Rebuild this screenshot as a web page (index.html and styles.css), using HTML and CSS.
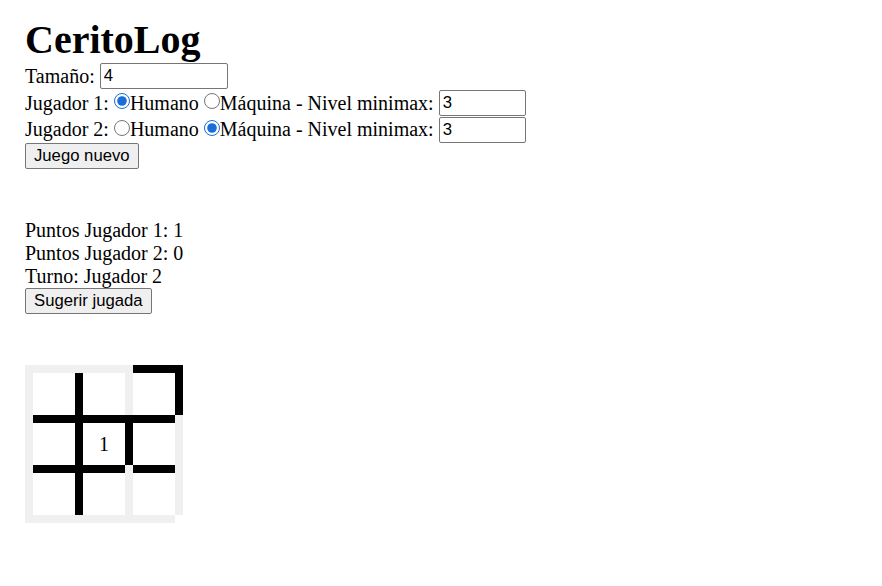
FILE: index.html
```html
<!DOCTYPE html>
<html>
<head>
<meta charset="utf-8">
<title>CeritoLog</title>
<link rel="stylesheet" href="styles.css">
</head>
<body class="page">
  <h1 class="title">CeritoLog</h1>
  <div class="row">Tamaño: <input class="field field-size" type="text" value="4"></div>
  <div class="row">Jugador 1: <input class="radio" type="radio" name="j1" checked>Humano <input class="radio" type="radio" name="j1">Máquina - Nivel minimax: <input class="field field-level" type="text" value="3"></div>
  <div class="row">Jugador 2: <input class="radio" type="radio" name="j2">Humano <input class="radio" type="radio" name="j2" checked>Máquina - Nivel minimax: <input class="field field-level" type="text" value="3"></div>
  <div class="row"><button class="btn">Juego nuevo</button></div>

  <div class="status">
    <div class="line">Puntos Jugador 1: 1</div>
    <div class="line">Puntos Jugador 2: 0</div>
    <div class="line">Turno: Jugador 2</div>
    <div class="row"><button class="btn">Sugerir jugada</button></div>
  </div>

  <div class="board">
    <div class="c g"></div><div class="c g"></div><div class="c g"></div><div class="c g"></div><div class="c g"></div><div class="c k"></div><div class="c k"></div>
    <div class="c g"></div><div class="c w"></div><div class="c k"></div><div class="c w"></div><div class="c g"></div><div class="c w"></div><div class="c k"></div>
    <div class="c g"></div><div class="c k"></div><div class="c k"></div><div class="c k"></div><div class="c k"></div><div class="c k"></div><div class="c g"></div>
    <div class="c g"></div><div class="c w"></div><div class="c k"></div><div class="c w box">1</div><div class="c k"></div><div class="c w"></div><div class="c g"></div>
    <div class="c g"></div><div class="c k"></div><div class="c k"></div><div class="c k"></div><div class="c g"></div><div class="c k"></div><div class="c g"></div>
    <div class="c g"></div><div class="c w"></div><div class="c k"></div><div class="c w"></div><div class="c g"></div><div class="c w"></div><div class="c g"></div>
    <div class="c g"></div><div class="c g"></div><div class="c g"></div><div class="c g"></div><div class="c g"></div><div class="c g"></div><div class="c w"></div>
  </div>
</body>
</html>
```

FILE: styles.css
```css
html, body {
  background: #ffffff;
}

.page {
  margin: 0;
  padding: 17px 25px 0 25px;
  font-family: "Liberation Serif", "Times New Roman", serif;
  font-size: 20px;
  line-height: 23px;
  color: #000000;
}

.title {
  margin: 0;
  font-size: 40px;
  line-height: 46px;
  font-weight: bold;
}

.row {
  height: 26.7px;
  display: flex;
  align-items: center;
  white-space: pre;
}

.field {
  box-sizing: border-box;
  height: 26px;
  margin: 0;
  padding: 1px 3px;
  border: 1px solid #767676;
  border-radius: 2px;
  font-family: "Liberation Sans", Arial, sans-serif;
  font-size: 16.7px;
  color: #000000;
  background: #ffffff;
}

.field-size {
  width: 128px;
}

.field-level {
  width: 87px;
}

.radio {
  width: 16px;
  height: 16px;
  margin: 0;
  flex: none;
  position: relative;
  top: -2px;
  accent-color: #1a6ed8;
}

.btn {
  box-sizing: border-box;
  height: 26px;
  margin: 0;
  padding: 0 8px;
  border: 1px solid #767676;
  border-radius: 2px;
  background: #efefef;
  font-family: "Liberation Sans", Arial, sans-serif;
  font-size: 16.7px;
  color: #000000;
}

.status {
  margin-top: 49px;
}

.line {
  height: 23px;
}

.board {
  margin-top: 51px;
  display: grid;
  grid-template-columns: 8px 42px 8px 42px 8px 42px 8px;
  grid-template-rows: 8px 42px 8px 42px 8px 42px 8px;
  width: 158px;
}

.c.g { background: #f0f0f0; }
.c.k { background: #000000; }
.c.w { background: #ffffff; }

.box {
  display: flex;
  align-items: center;
  justify-content: center;
  font-size: 20px;
}
```
